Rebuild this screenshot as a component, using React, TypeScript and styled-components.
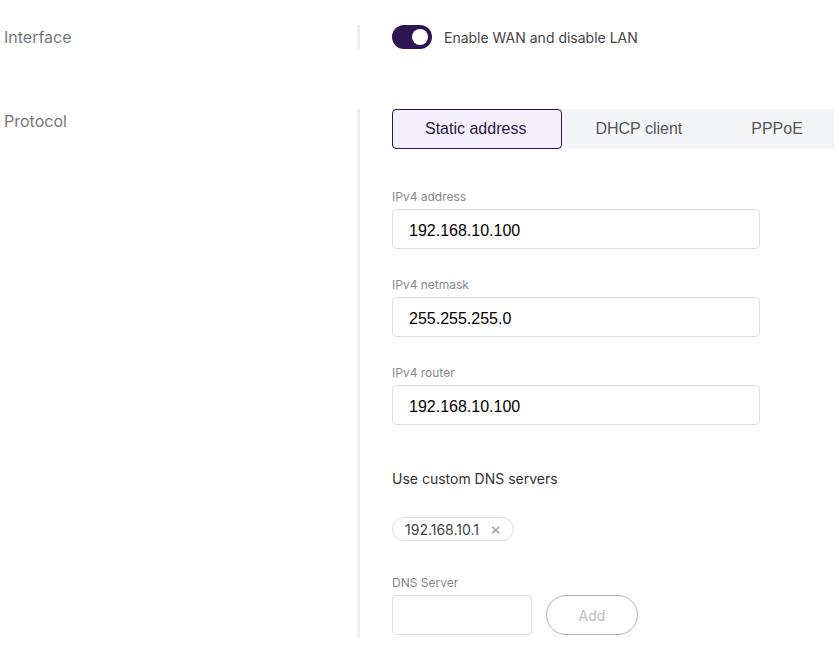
import { useState } from "react";
import styled, { createGlobalStyle } from "styled-components";

const GlobalStyle = createGlobalStyle`
    body {
        margin: 0;
        background: #ffffff;
        font-family: Inter, "Noto Sans", sans-serif;
    }
`;

const Page = styled.div`
    padding: 25px 0 0 4px;
    display: flex;
    flex-direction: column;
    gap: 60px;
`;
const Row = styled.div`
    display: grid;
    grid-template-columns: 353px 3px 1fr;
`;
const RowLabel = styled.div`
    font-size: 16px;
    line-height: 24px;
    color: #777777;
`;
const Divider = styled.div`
    background: #eeeeee;
    width: 3px;
`;
const Content = styled.div<{ $bottom?: number }>`
    padding-left: 32px;
    padding-bottom: ${(p) => p.$bottom ?? 0}px;
    display: flex;
    flex-direction: column;
    min-width: 0;
`;
const SwitchRow = styled.label`
    display: flex;
    align-items: center;
    gap: 12px;
    font-size: 14px;
    color: #444444;
    height: 24px;
`;
const Track = styled.span<{ $on: boolean }>`
    width: 40px;
    height: 24px;
    border-radius: 12px;
    background: ${(p) => (p.$on ? "#2e1452" : "#cccccc")};
    display: flex;
    align-items: center;
    justify-content: ${(p) => (p.$on ? "flex-end" : "flex-start")};
    padding: 0 4px;
    box-sizing: border-box;
    cursor: pointer;
`;
const Knob = styled.span`
    width: 16px;
    height: 16px;
    border-radius: 50%;
    background: #ffffff;
`;
const Tabs = styled.div`
    display: flex;
    width: 442px;
    overflow: hidden;
    background: #f4f5f7;
`;
const Tab = styled.button<{ $active: boolean }>`
    flex-shrink: 0;
    white-space: nowrap;
    height: 40px;
    padding: 0 35px 0 32px;
    font-family: "Liberation Sans", Arial, sans-serif;
    font-size: 16px;
    color: ${(p) => (p.$active ? "#2a1a45" : "#555555")};
    background: ${(p) => (p.$active ? "#f4effd" : "transparent")};
    border: 1px solid ${(p) => (p.$active ? "#2e1452" : "transparent")};
    border-radius: 4px;
    cursor: pointer;
`;
const Field = styled.div<{ $top: number }>`
    margin-top: ${(p) => p.$top}px;
    display: flex;
    flex-direction: column;
    gap: 4px;
`;
const FieldLabel = styled.div`
    font-size: 12px;
    line-height: 16px;
    color: #888888;
`;
const Input = styled.input<{ $width: number }>`
    width: ${(p) => p.$width}px;
    height: 40px;
    box-sizing: border-box;
    border: 1px solid #dddddd;
    border-radius: 4px;
    padding: 3px 16px 0;
    font-family: "Liberation Sans", Arial, sans-serif;
    font-size: 16px;
    color: #000000;
    outline: none;
`;
const SectionTitle = styled.div`
    margin-top: 44px;
    font-size: 14px;
    line-height: 20px;
    color: #333333;
`;
const Chips = styled.div`
    margin-top: 28px;
    display: flex;
    gap: 8px;
`;
const Chip = styled.span`
    display: inline-flex;
    align-items: center;
    gap: 11px;
    height: 24px;
    box-sizing: border-box;
    padding: 0 12px;
    border: 1px solid #dddddd;
    border-radius: 12px;
    font-size: 14px;
    color: #444444;
`;
const ChipClose = styled.span`
    color: #999999;
    font-size: 17px;
    line-height: 1;
    cursor: pointer;
`;
const AddRow = styled.div`
    display: flex;
    gap: 14px;
    align-items: center;
`;
const AddBtn = styled.button`
    width: 92px;
    height: 40px;
    border-radius: 20px;
    border: 1px solid #b9a9cf;
    background: #ffffff;
    color: #bbbbbb;
    font-family: Inter, sans-serif;
    font-size: 14px;
`;

export default function App(){
    const [wan, setWan] = useState(true);
    const [tab, setTab] = useState("Static address");
    return(
        <Page>
            <GlobalStyle/>
            <Row>
                <RowLabel>Interface</RowLabel>
                <Divider/>
                <Content>
                    <SwitchRow onClick={() => setWan(!wan)}>
                        <Track $on={wan}><Knob/></Track>
                        Enable WAN and disable LAN
                    </SwitchRow>
                </Content>
            </Row>
            <Row>
                <RowLabel>Protocol</RowLabel>
                <Divider/>
                <Content $bottom={3}>
                    <Tabs>
                        {["Static address", "DHCP client", "PPPoE"].map((t) => (
                            <Tab key={t} $active={tab === t} onClick={() => setTab(t)}>{t}</Tab>
                        ))}
                    </Tabs>
                    <Field $top={40}>
                        <FieldLabel>IPv4 address</FieldLabel>
                        <Input $width={368} defaultValue="192.168.10.100"/>
                    </Field>
                    <Field $top={28}>
                        <FieldLabel>IPv4 netmask</FieldLabel>
                        <Input $width={368} defaultValue="255.255.255.0"/>
                    </Field>
                    <Field $top={28}>
                        <FieldLabel>IPv4 router</FieldLabel>
                        <Input $width={368} defaultValue="192.168.10.100"/>
                    </Field>
                    <SectionTitle>Use custom DNS servers</SectionTitle>
                    <Chips>
                        <Chip>192.168.10.1<ChipClose>×</ChipClose></Chip>
                    </Chips>
                    <Field $top={34}>
                        <FieldLabel>DNS Server</FieldLabel>
                        <AddRow>
                            <Input $width={140}/>
                            <AddBtn>Add</AddBtn>
                        </AddRow>
                    </Field>
                </Content>
            </Row>
        </Page>
    );
}
